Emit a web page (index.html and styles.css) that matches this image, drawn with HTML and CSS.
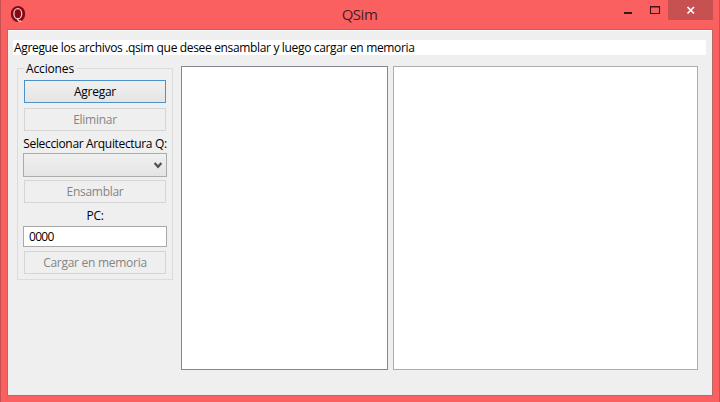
FILE: index.html
```html
<!DOCTYPE html>
<html lang="es">
<head>
<meta charset="utf-8">
<title>QSim</title>
<link rel="stylesheet" href="styles.css">
</head>
<body>
<div class="window">
  <header class="titlebar">
    <svg class="logo" width="16" height="18" viewBox="0 0 16 18">
      <ellipse cx="8" cy="8" rx="7.2" ry="8" fill="#850812"/>
      <ellipse cx="7.8" cy="7.7" rx="3.9" ry="5.1" fill="none" stroke="#f3c9c9" stroke-width="1.3"/>
      <path d="M7.500 12.500C8 15 9.200 16 11.200 14.800" fill="none" stroke="#f3c9c9" stroke-width="1.400"/>
    </svg>
    <h1 class="title">QSim</h1>
    <div class="controls">
      <svg width="112" height="20" viewBox="0 0 112 20">
        <rect x="67" width="45" height="20" fill="#c75050"/>
        <rect x="23" y="12" width="8" height="2" fill="#3b1719"/>
        <path d="M49.500 6.500h9v7h-9z M49 7h10" fill="none" stroke="#3b1719" stroke-width="1.100"/>
        <path d="M86.500 7l6.500 6.500M93 7l-6.500 6.500" stroke="#fff" stroke-width="1.700"/>
      </svg>
    </div>
  </header>
  <main class="client">
    <p class="hint"><span>Agregue los archivos .qsim que desee ensamblar y luego cargar en memoria</span></p>
    <div class="columns">
      <section class="group">
        <h2 class="legend">Acciones</h2>
        <button class="btn focused">Agregar</button>
        <button class="btn" disabled>Eliminar</button>
        <label class="caption arch">Seleccionar Arquitectura Q:</label>
        <div class="combo">
          <svg width="8" height="7" viewBox="0 0 8 7"><path d="M.6 1L4 4.700 7.400 1" fill="none" stroke="#505050" stroke-width="2.300"/></svg>
        </div>
        <button class="btn" disabled>Ensamblar</button>
        <label class="caption pc">PC:</label>
        <input class="field" value="0000">
        <button class="btn load" disabled>Cargar en memoria</button>
      </section>
      <div class="list files"></div>
      <div class="list output"></div>
    </div>
  </main>
</div>
</body>
</html>
```
FILE: styles.css
```css
* { box-sizing: border-box; }
body {
  margin: 0;
  font-family: "Open Sans", "Noto Sans", sans-serif;
  font-size: 12px;
  letter-spacing: -0.34px;
  color: #000;
}
.window {
  width: 720px;
  height: 402px;
  display: flex;
  flex-direction: column;
  padding: 0 6px 6px;
  background: #fa6060;
  border-left: 1px solid #c95050;
  border-right: 1px solid #c95050;
  overflow: hidden;
}
.titlebar {
  height: 29px;
  flex: none;
  display: grid;
  grid-template-columns: 112px 1fr 112px;
}
.logo { margin: 6px 0 0 3px; }
.title {
  margin: 0;
  padding: 0 1px 0 0;
  font-size: 15px;
  font-weight: 400;
  line-height: 29px;
  letter-spacing: -0.5px;
  text-align: center;
  color: #4a1c1e;
}
.controls svg { display: block; }
.client {
  flex: 1;
  border: 1px solid #b96666;
  background: #efefef;
  padding: 10px 6px 0 5px;
  box-shadow: inset 0 1px #fff;
}
.hint {
  margin: 0 0 11px;
  height: 15px;
  padding-left: 1px;
  background: #fff;
  line-height: 15px;
  white-space: nowrap;
}
.columns {
  display: flex;
  align-items: flex-start;
  padding-left: 4px;
}
.group {
  width: 156px;
  height: 212px;
  margin: 2px 8px 0 0;
  padding: 0 5px;
  border: 1px solid #dcdcdc;
  display: flex;
  flex-direction: column;
}
.legend {
  align-self: flex-start;
  margin: -8px 0 4px 1px;
  padding: 0 3px 0 2px;
  height: 15px;
  line-height: 15px;
  font-size: 12px;
  font-weight: 400;
  letter-spacing: -0.15px;
  background: #efefef;
}
.btn {
  flex: none;
  width: 142px;
  height: 23px;
  margin: 0 1px 5px;
  padding: 0;
  border: 1px solid #d5d5d5;
  background: #efefef;
  font: inherit;
  letter-spacing: -0.28px;
  line-height: 21px;
  color: #858585;
}
.btn.focused {
  border-color: #4e91c8;
  background: linear-gradient(#f0f0f0, #e5e5e5);
  color: #000;
}
.caption {
  height: 15px;
  line-height: 15px;
  white-space: nowrap;
  text-align: center;
}
.arch { margin-bottom: 2px; }
.pc { margin: 0 0 3px; }
.combo {
  height: 24px;
  flex: none;
  margin-bottom: 3px;
  padding-right: 4px;
  border: 1px solid #acacac;
  background: linear-gradient(#f0f0f0, #e5e5e5);
  display: flex;
  align-items: center;
  justify-content: flex-end;
}
.field {
  width: 144px;
  height: 21px;
  flex: none;
  margin: 0 0 4px;
  padding: 0 5px;
  border: 1px solid #a9a9a9;
  background: #fff;
  font: inherit;
  letter-spacing: -0.7px;
  color: #000;
}
.list {
  height: 304px;
  background: #fff;
}
.files {
  width: 207px;
  margin-right: 5px;
  border: 1px solid #828790;
}
.output {
  width: 305px;
  border: 1px solid #abadb3;
}
```
